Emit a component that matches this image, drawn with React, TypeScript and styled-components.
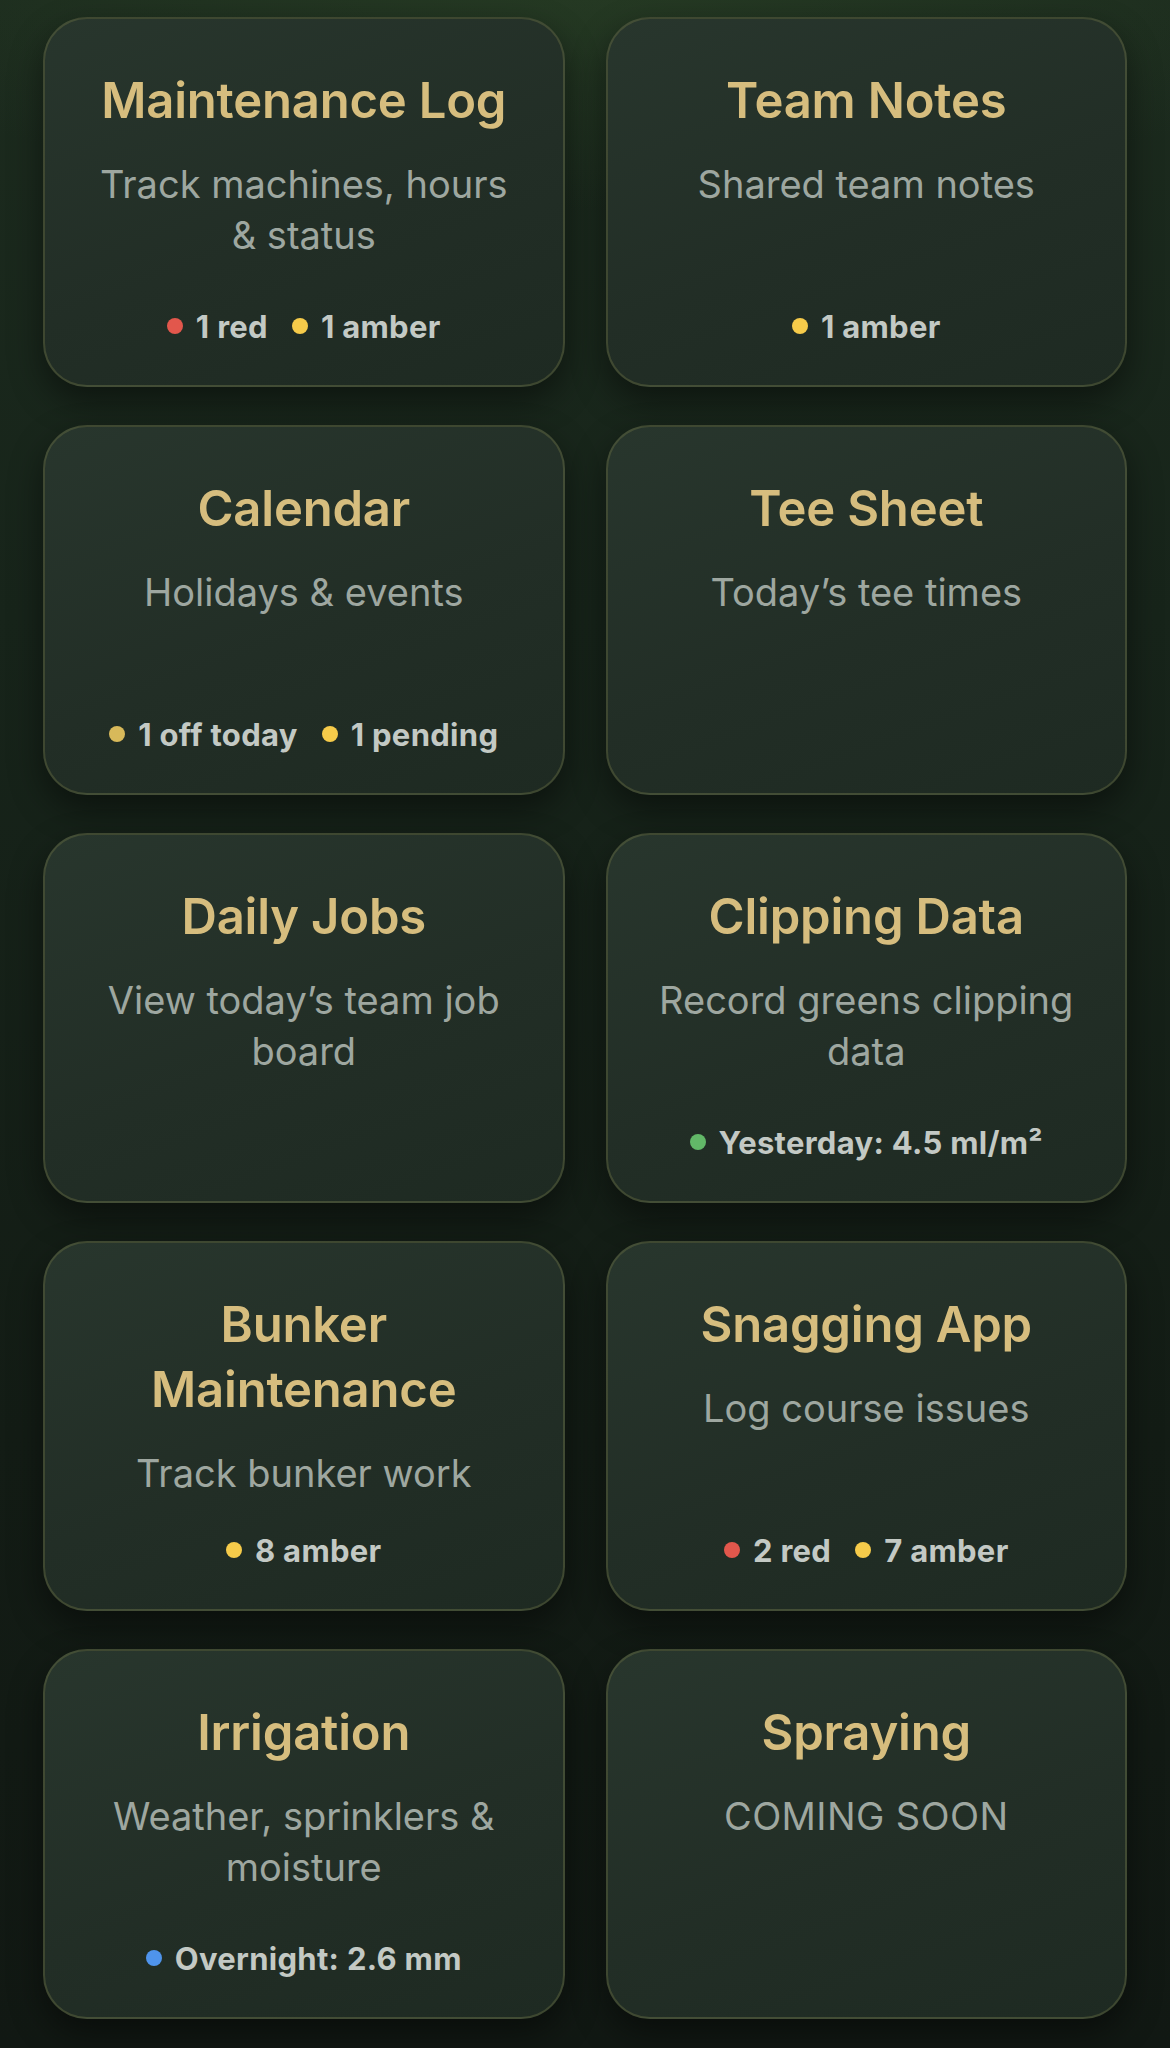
import React from "react";
import styled, { createGlobalStyle } from "styled-components";

const Global = createGlobalStyle`
  html, body { margin: 0; padding: 0; }
  body {
    background: #121a14;
    font-family: Inter, "Noto Sans", "Liberation Sans", sans-serif;
    -webkit-font-smoothing: antialiased;
  }
`;

const Page = styled.main`
  min-height: 2048px;
  box-sizing: border-box;
  padding: 17px 43px 31px;
  background:
    radial-gradient(ellipse 800px 240px at 50% -30px, rgba(50, 78, 42, 0.45), rgba(50, 78, 42, 0) 100%),
    linear-gradient(180deg, #1c2b1e 0%, #17241a 30%, #131c15 70%, #111813 100%);
`;

const Grid = styled.div`
  display: grid;
  grid-template-columns: 1fr 1fr;
  column-gap: 41px;
  row-gap: 38px;
`;

const Card = styled.div`
  height: 370px;
  box-sizing: border-box;
  border-radius: 44px;
  border: 2px solid rgba(112, 118, 72, 0.38);
  background: linear-gradient(160deg, #28362d 0%, #222e26 55%, #1e2a22 100%);
  box-shadow: 0 14px 34px rgba(0, 0, 0, 0.45);
  padding: 49px 44px 39px;
  display: flex;
  flex-direction: column;
  align-items: center;
  text-align: center;
`;

const Title = styled.h2`
  margin: 0;
  font-size: 49px;
  line-height: 65px;
  font-weight: 600;
  color: #d6bd7e;
  letter-spacing: -0.2px;
`;

const Subtitle = styled.p<{ $caps?: boolean }>`
  margin: 26px 0 0;
  font-size: 38px;
  line-height: 51px;
  font-weight: 400;
  color: #9ea7a0;
  letter-spacing: ${(p) => (p.$caps ? "0.4px" : "0")};
`;

const StatusRow = styled.div`
  margin-top: auto;
  display: flex;
  align-items: center;
  justify-content: center;
  gap: 24px;
  height: 40px;
`;

const Status = styled.span`
  display: inline-flex;
  align-items: center;
  gap: 13px;
  font-size: 31px;
  font-weight: 700;
  letter-spacing: 0.3px;
  color: #c3c9c4;
  white-space: nowrap;
`;

const Dot = styled.span<{ $color: string }>`
  width: 16px;
  height: 16px;
  border-radius: 50%;
  background: ${(p) => p.$color};
  flex: none;
`;

type Stat = { color: string; text: string };
type Item = { title: string; subtitle: string; caps?: boolean; stats: Stat[] };

const RED = "#e2574c";
const AMBER = "#f6cb4a";
const GOLD = "#d8b95a";
const GREEN = "#62b868";
const BLUE = "#4f94ec";

const items: Item[] = [
  { title: "Maintenance Log", subtitle: "Track machines, hours & status", stats: [{ color: RED, text: "1 red" }, { color: AMBER, text: "1 amber" }] },
  { title: "Team Notes", subtitle: "Shared team notes", stats: [{ color: AMBER, text: "1 amber" }] },
  { title: "Calendar", subtitle: "Holidays & events", stats: [{ color: GOLD, text: "1 off today" }, { color: AMBER, text: "1 pending" }] },
  { title: "Tee Sheet", subtitle: "Today\u2019s tee times", stats: [] },
  { title: "Daily Jobs", subtitle: "View today\u2019s team job board", stats: [] },
  { title: "Clipping Data", subtitle: "Record greens clipping data", stats: [{ color: GREEN, text: "Yesterday: 4.5 ml/m\u00b2" }] },
  { title: "Bunker Maintenance", subtitle: "Track bunker work", stats: [{ color: AMBER, text: "8 amber" }] },
  { title: "Snagging App", subtitle: "Log course issues", stats: [{ color: RED, text: "2 red" }, { color: AMBER, text: "7 amber" }] },
  { title: "Irrigation", subtitle: "Weather, sprinklers & moisture", stats: [{ color: BLUE, text: "Overnight: 2.6 mm" }] },
  { title: "Spraying", subtitle: "COMING SOON", caps: true, stats: [] },
];

export default function App() {
  return (
    <>
      <Global />
      <Page>
        <Grid>
          {items.map((it) => (
            <Card key={it.title}>
              <Title>{it.title}</Title>
              <Subtitle $caps={it.caps}>{it.subtitle}</Subtitle>
              {it.stats.length > 0 && (
                <StatusRow>
                  {it.stats.map((s) => (
                    <Status key={s.text}>
                      <Dot $color={s.color} />
                      {s.text}
                    </Status>
                  ))}
                </StatusRow>
              )}
            </Card>
          ))}
        </Grid>
      </Page>
    </>
  );
}
